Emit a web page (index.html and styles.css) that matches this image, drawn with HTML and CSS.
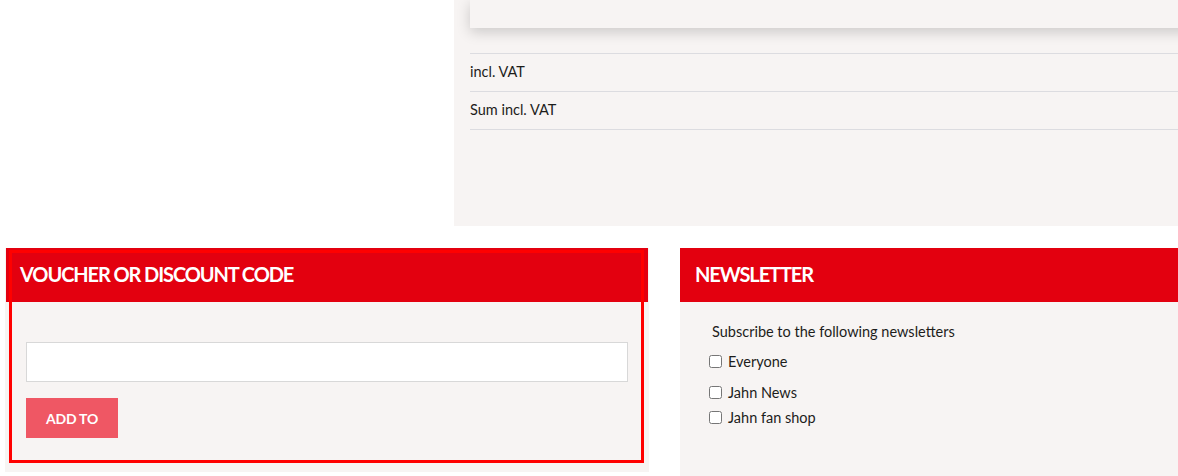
FILE: index.html
```html
<!DOCTYPE html>
<html>
<head>
<meta charset="utf-8">
<link rel="stylesheet" href="styles.css">
</head>
<body>
<div class="top">
  <div class="spacer"></div>
  <div class="summary">
    <div class="card"></div>
    <div class="rows">
      <div class="row">incl. VAT</div>
      <div class="row">Sum incl. VAT</div>
    </div>
  </div>
</div>
<div class="bottom">
  <div class="panel voucher">
    <div class="head">VOUCHER OR DISCOUNT CODE</div>
    <div class="body">
      <input class="code" type="text">
      <button class="add">ADD TO</button>
    </div>
    <div class="focus"></div>
  </div>
  <div class="panel news">
    <div class="head">NEWSLETTER</div>
    <div class="body">
      <p class="intro">Subscribe to the following newsletters</p>
      <label class="opt first"><input type="checkbox"> Everyone</label>
      <label class="opt"><input type="checkbox"> Jahn News</label>
      <label class="opt"><input type="checkbox"> Jahn fan shop</label>
    </div>
  </div>
</div>
</body>
</html>
```
FILE: styles.css
```css
* { box-sizing: border-box; }
html, body { margin: 0; padding: 0; background: #fff; }
body { font-family: Lato, "Noto Sans", sans-serif; color: #1d1d1b; font-size: 14.5px; width: 1178px; height: 476px; overflow: hidden; }

.top { display: flex; height: 226px; }
.spacer { width: 454px; flex: none; }
.summary { flex: 1; background: #f7f4f3; padding-left: 16px; overflow: hidden; }
.card { height: 28px; background: #f7f4f3; box-shadow: 0 4px 14px rgba(0,0,0,0.18); margin-right: -20px; }
.rows { margin-top: 25px; border-top: 1px solid #dcdce0; }
.row { height: 38px; border-bottom: 1px solid #dcdce0; display: flex; align-items: center; padding-bottom: 2px; }

.bottom { display: flex; margin-top: 22px; height: 228px; }
.panel { background: #f7f4f3; position: relative; }
.voucher { margin-left: 5px; width: 644px; height: 224px; }
.news { margin-left: 31px; flex: 1; }
.head { height: 54px; background: #e3000f; color: #fff; font-weight: 700; font-size: 20px; display: flex; align-items: center; padding-left: 15px; letter-spacing: -1.1px; padding-bottom: 2px; }
.voucher .head { margin-left: 1px; margin-right: 1px; padding-left: 14px; }
.voucher .body { padding: 40px 20px 0 21px; display: flex; flex-direction: column; align-items: flex-start; }
.code { width: 602px; height: 40px; border: 1px solid #d8d8d8; background: #fff; margin: 0; }
.add { margin-top: 16px; width: 92px; height: 40px; border: 0; background: #ef5764; color: #fff; font-family: inherit; font-weight: 700; font-size: 14px; padding: 0; letter-spacing: -0.2px; }
.focus { position: absolute; left: 4px; top: 2px; width: 635px; height: 213px; border: 3px solid #ff0000; pointer-events: none; }

.news .body { padding: 20px 0 0 28px; }
.intro { margin: 0 0 0 4px; line-height: 20px; }
.opt { display: flex; align-items: center; height: 18px; margin-top: 11px; }
.opt.first { margin-top: 10px; }
.opt + .opt { margin-top: 13px; }
.opt + .opt + .opt { margin-top: 7px; }
.opt input { margin: 0 6px 0 1px; width: 13px; height: 13px; }
```
